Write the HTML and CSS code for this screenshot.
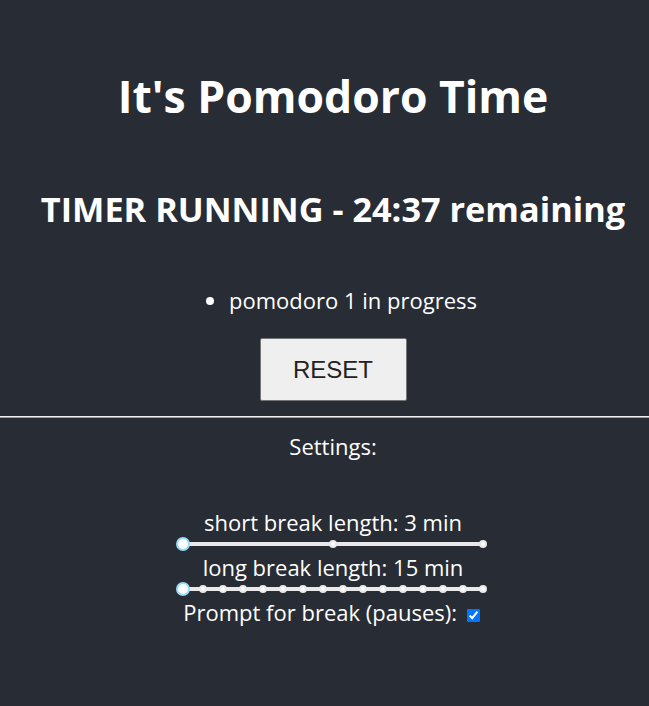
FILE: index.html
```html
<!DOCTYPE html>
<html lang="en">
<head>
<meta charset="utf-8">
<title>Pomodoro</title>
<link rel="stylesheet" href="styles.css">
</head>
<body>
<div class="app">
  <header class="app-header">
    <h1 class="title">It's Pomodoro Time</h1>
    <h2 class="status">TIMER RUNNING - 24:37 remaining</h2>
    <ul class="log">
      <li class="log-item">pomodoro 1 in progress</li>
    </ul>
    <button class="reset" type="button">RESET</button>
  </header>
  <hr class="divider">
  <section class="settings">
    <div class="settings-title">Settings:</div>
    <div class="setting first">
      <div class="label">short break length: 3 min</div>
      <div class="slider">
        <div class="rail">
          <div class="dots">
            <span class="dot"></span><span class="dot"></span><span class="dot"></span>
          </div>
          <span class="handle"></span>
        </div>
      </div>
    </div>
    <div class="setting">
      <div class="label">long break length: 15 min</div>
      <div class="slider">
        <div class="rail">
          <div class="dots">
            <span class="dot"></span><span class="dot"></span><span class="dot"></span><span class="dot"></span>
            <span class="dot"></span><span class="dot"></span><span class="dot"></span><span class="dot"></span>
            <span class="dot"></span><span class="dot"></span><span class="dot"></span><span class="dot"></span>
            <span class="dot"></span><span class="dot"></span><span class="dot"></span><span class="dot"></span>
          </div>
          <span class="handle"></span>
        </div>
      </div>
    </div>
    <label class="prompt">Prompt for break (pauses): <input class="check" type="checkbox" checked></label>
  </section>
</div>
</body>
</html>
```

FILE: styles.css
```css
html, body {
  margin: 0;
  padding: 0;
  background: #282c34;
}

body {
  font-family: "Open Sans", "Noto Sans", sans-serif;
  color: #ffffff;
  font-size: 22px;
  min-height: 706px;
}

.app {
  padding-left: 17px;
  text-align: center;
}

.app-header {
  display: flex;
  flex-direction: column;
  align-items: center;
}

.title {
  margin: 69px 0 0;
  font-size: 44.5px;
  line-height: 54px;
  font-weight: 700;
}

.status {
  margin: 66px 0 0;
  font-size: 34.3px;
  line-height: 40px;
  font-weight: 700;
}

.log {
  margin: 57px 0 0;
  padding-left: 40px;
  width: 100%;
  box-sizing: border-box;
  line-height: 28px;
  display: flex;
  justify-content: center;
}

.log-item {
  list-style: disc outside;
}

.reset {
  margin-top: 24px;
  width: 147px;
  height: 63px;
  box-sizing: border-box;
  font-family: "Liberation Sans", Arial, sans-serif;
  font-size: 24px;
  color: #222;
  background: #efefef;
  border: 1px solid #767676;
  border-radius: 2px;
  padding: 0;
}

.divider {
  margin: 15px 0 0 -17px;
  height: 0;
  border: 0;
  border-top: 1px solid #f0f0f0;
  border-bottom: 1px solid #9a9a9a;
}

.settings {
  display: flex;
  flex-direction: column;
  align-items: center;
  line-height: 28px;
}

.settings-title {
  margin-top: 14px;
}

.setting {
  display: flex;
  flex-direction: column;
  align-items: center;
}

.setting.first {
  margin-top: 48px;
}

.slider {
  width: 300px;
  height: 17px;
  display: flex;
  align-items: center;
  padding-bottom: 1px;
  box-sizing: border-box;
}

.rail {
  position: relative;
  width: 100%;
  height: 4px;
  background: #e9e9e9;
  border-radius: 2px;
}

.dots {
  display: flex;
  justify-content: space-between;
  align-items: center;
  margin: 0 -4px;
  height: 4px;
}

.dot {
  width: 8px;
  height: 8px;
  box-sizing: border-box;
  border-radius: 50%;
  background: #fff;
  border: 2px solid #e9e9e9;
}

.handle {
  position: absolute;
  left: -7px;
  top: -5px;
  width: 14px;
  height: 14px;
  box-sizing: border-box;
  border-radius: 50%;
  background: #fff;
  border: 2px solid #96dbfa;
}

.prompt {
  display: block;
}

.check {
  margin: 0 3px 0 4px;
  width: 13px;
  height: 13px;
  vertical-align: -1px;
}
```
